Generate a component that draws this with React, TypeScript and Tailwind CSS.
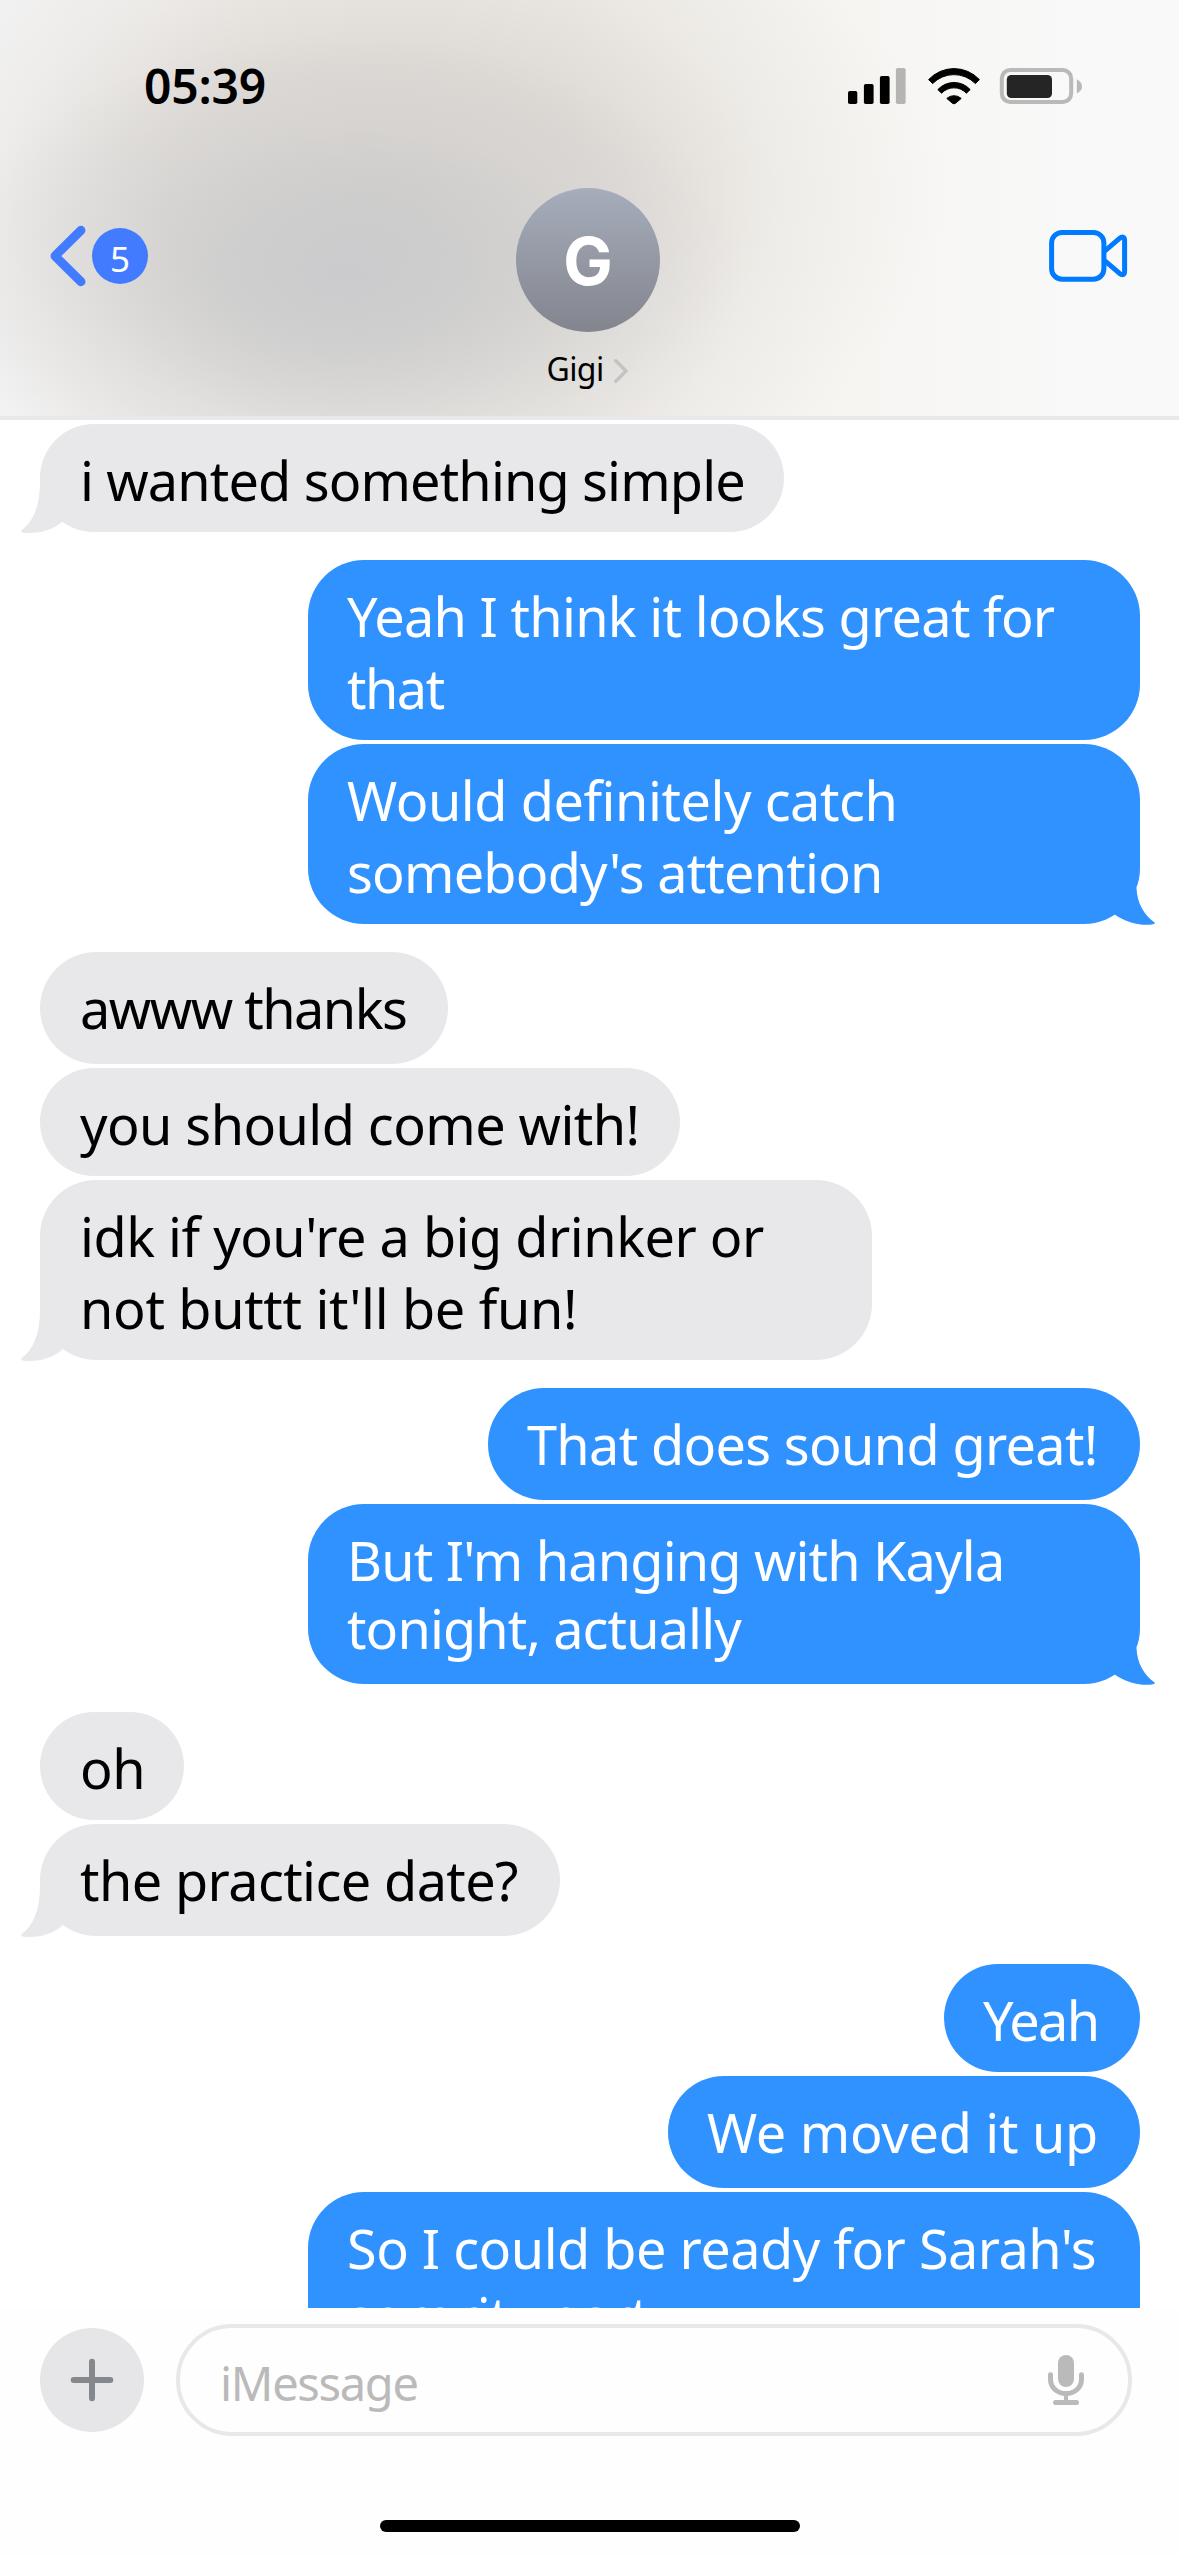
interface Line {
  text: string;
  tracking: string;
}

interface Message {
  id: string;
  size: string;
  leading?: string;
  lines: Line[];
}

interface Group {
  id: string;
  from: 'me' | 'them';
  tail: boolean;
  messages: Message[];
}

const GROUPS: Group[] = [
  {
    id: 'g1',
    from: 'them',
    tail: true,
    messages: [
      {
        id: 'm1',
        size: 'w-[744px] h-[108px]',
        lines: [{ text: 'i wanted something simple', tracking: 'tracking-[-0.85px]' }],
      },
    ],
  },
  {
    id: 'g2',
    from: 'me',
    tail: true,
    messages: [
      {
        id: 'm2',
        size: 'w-[832px] h-[180px]',
        lines: [
          { text: 'Yeah I think it looks great for', tracking: 'tracking-[-0.7px]' },
          { text: 'that', tracking: 'tracking-[-1.5px]' },
        ],
      },
      {
        id: 'm3',
        size: 'w-[832px] h-[180px]',
        lines: [
          { text: 'Would definitely catch', tracking: 'tracking-[-0.45px]' },
          { text: "somebody's attention", tracking: 'tracking-[-0.78px]' },
        ],
      },
    ],
  },
  {
    id: 'g3',
    from: 'them',
    tail: true,
    messages: [
      {
        id: 'm4',
        size: 'w-[408px] h-[112px]',
        lines: [{ text: 'awww thanks', tracking: 'tracking-[-1.5px]' }],
      },
      {
        id: 'm5',
        size: 'w-[640px] h-[108px]',
        lines: [{ text: 'you should come with!', tracking: 'tracking-[-0.57px]' }],
      },
      {
        id: 'm6',
        size: 'w-[832px] h-[180px]',
        lines: [
          { text: "idk if you're a big drinker or", tracking: 'tracking-[-0.49px]' },
          { text: "not buttt it'll be fun!", tracking: 'tracking-[-0.33px]' },
        ],
      },
    ],
  },
  {
    id: 'g4',
    from: 'me',
    tail: true,
    messages: [
      {
        id: 'm7',
        size: 'w-[652px] h-[112px]',
        lines: [{ text: 'That does sound great!', tracking: 'tracking-[-0.66px]' }],
      },
      {
        id: 'm8',
        size: 'w-[832px] h-[180px]',
        leading: 'pt-[22px] leading-[68px]',
        lines: [
          { text: "But I'm hanging with Kayla", tracking: 'tracking-[-0.83px]' },
          { text: 'tonight, actually', tracking: 'tracking-[-0.88px]' },
        ],
      },
    ],
  },
  {
    id: 'g5',
    from: 'them',
    tail: true,
    messages: [
      {
        id: 'm9',
        size: 'w-[144px] h-[108px]',
        lines: [{ text: 'oh', tracking: 'tracking-[-0.5px]' }],
      },
      {
        id: 'm10',
        size: 'w-[520px] h-[112px]',
        lines: [{ text: 'the practice date?', tracking: 'tracking-[-0.6px]' }],
      },
    ],
  },
  {
    id: 'g6',
    from: 'me',
    tail: false,
    messages: [
      {
        id: 'm11',
        size: 'w-[196px] h-[108px]',
        lines: [{ text: 'Yeah', tracking: 'tracking-[-1.6px]' }],
      },
      {
        id: 'm12',
        size: 'w-[472px] h-[112px]',
        lines: [{ text: 'We moved it up', tracking: 'tracking-[-0.28px]' }],
      },
      {
        id: 'm13',
        size: 'w-[832px] h-[180px]',
        leading: 'pt-[22px] leading-[68px]',
        lines: [
          { text: "So I could be ready for Sarah's", tracking: 'tracking-[-0.5px]' },
          { text: 'sorority party', tracking: 'tracking-[-1px]' },
        ],
      },
    ],
  },
];

const HEADER_BG =
  'bg-[radial-gradient(ellipse_400px_240px_at_345px_275px,rgba(200,201,205,0.85)_0%,rgba(202,203,204,0.72)_30%,rgba(208,208,208,0.4)_62%,rgba(225,224,220,0)_100%),radial-gradient(ellipse_560px_340px_at_385px_195px,rgba(208,202,198,0.8)_0%,rgba(212,207,202,0.65)_38%,rgba(225,221,215,0.3)_70%,rgba(240,238,234,0)_100%),linear-gradient(to_right,#f4f4f5_0%,#f0edea_22%,#eeebe7_48%,#f6f5f2_72%,#f9f9f9_92%)]';

function StatusIcons() {
  return (
    <svg viewBox="848 66 236 40" className="h-10 w-[236px]" aria-hidden="true">
      <rect x="848" y="91" width="9.3" height="13" rx="1.8" />
      <rect x="863.9" y="84" width="9.7" height="20" rx="1.8" />
      <rect x="879.9" y="76" width="9.7" height="28" rx="1.8" />
      <rect x="895.9" y="68" width="9.7" height="36" rx="1.8" fill="#b5b4b3" />
      <g stroke="#000" strokeLinejoin="round">
        <path d="M928.6 79.6A34.8 34.8 0 0 1 979.4 79.6L975.4 83.6A30 30 0 0 0 932.6 83.6Z" />
        <path d="M937.8 89.6A22 22 0 0 1 970.2 89.6L966.4 93.2A17 17 0 0 0 941.6 93.2Z" />
        <path d="M946.8 98.4A11 11 0 0 1 961.2 98.4L955.6 103.2Q954 104.4 952.4 103.2Z" />
      </g>
      <rect x="1001.8" y="70" width="69.4" height="32" rx="8.5" fill="none" stroke="#b9b9b9" strokeWidth="4" />
      <rect x="1006.8" y="75" width="45.2" height="23" rx="4.5" fill="#252525" />
      <path d="M1076.8 79.3Q1082 82.2 1082 86.4T1076.8 93.5Z" fill="#b9b9b9" />
    </svg>
  );
}

function BackChevron() {
  return (
    <svg viewBox="50 225 36 62" className="h-[62px] w-9" fill="none" aria-hidden="true">
      <path
        d="M81 230.3L55 256L81 281.7"
        stroke="#427bff"
        strokeWidth="9"
        strokeLinecap="round"
        strokeLinejoin="round"
      />
    </svg>
  );
}

function VideoIcon() {
  return (
    <svg viewBox="1048 229 80 54" className="h-[54px] w-20" fill="none" aria-hidden="true">
      <g stroke="#007aff" strokeWidth="5" strokeLinejoin="round">
        <rect x="1051.6" y="232.5" width="52.3" height="46.7" rx="10.5" />
        <path d="M1104 251.6L1119.6 238.3C1122.6 236 1124.6 237 1124.6 240.4V271.3C1124.6 274.7 1122.6 275.7 1119.6 273.4L1104 260.1" />
      </g>
    </svg>
  );
}

function MicIcon() {
  return (
    <svg viewBox="1046 2355 40 54" className="h-[54px] w-10" fill="none" aria-hidden="true">
      <rect x="1058" y="2357" width="16" height="32" rx="8" fill="#bababa" />
      <path
        d="M1050.5 2376.8V2381C1050.5 2389.6 1057.2 2395.5 1066 2395.5S1081.5 2389.6 1081.5 2381V2376.8M1055.5 2404.6H1076.5"
        stroke="#bababa"
        strokeWidth="5"
        strokeLinecap="round"
      />
      <path d="M1066 2396V2404" stroke="#bababa" strokeWidth="4" />
    </svg>
  );
}

function Tail({ from }: { from: Group['from'] }) {
  if (from === 'me') {
    return (
      <svg viewBox="0 0 46 52" className="absolute -right-4 -bottom-0.5 h-[52px] w-[46px]" aria-hidden="true">
        <path
          d="M26.5 14C27 29 34 41 44.6 48.6Q45.6 50 42 50.5C29 52 15 48 4.7 40.5L4 14Z"
          fill="#2f92ff"
        />
      </svg>
    );
  }
  return (
    <svg viewBox="0 0 60 60" className="absolute -bottom-0.5 -left-5 h-[60px] w-[60px]" aria-hidden="true">
      <path
        d="M20 0V8C20 32 13 48 1.6 56Q0 58.6 5 58.9C20 60 34 55.4 43 47L56 30Z"
        fill="#e8e8ea"
      />
    </svg>
  );
}

function Bubble({ message, from, tail }: { message: Message; from: Group['from']; tail: boolean }) {
  const color = from === 'me' ? 'bg-[#2f92ff] pl-[39px] text-white' : 'bg-[#e8e8ea] pl-10 text-black';
  const leading = message.leading ?? 'pt-5 leading-[72px]';
  return (
    <div
      className={`relative shrink-0 rounded-[56px] text-[54px] whitespace-nowrap ${message.size} ${color} ${leading}`}
    >
      {message.lines.map((l) => (
        <p key={l.text} className={l.tracking}>
          {l.text}
        </p>
      ))}
      {tail ? <Tail from={from} /> : null}
    </div>
  );
}

function Header() {
  return (
    <header className={`flex h-[420px] shrink-0 flex-col border-b-4 border-[#e8e8ea] ${HEADER_BG}`}>
      <div className="flex h-[188px] items-start justify-between pt-[66px] pr-[95px] pl-36">
        <span className="-mt-2 text-[48px] leading-[56px] font-semibold tracking-[-0.2px]">05:39</span>
        <StatusIcons />
      </div>
      <div className="grid grid-cols-3 items-start">
        <div className="flex items-center gap-1.5 pt-[37px] pl-[50px]">
          <BackChevron />
          <span className="flex size-14 items-center justify-center rounded-full bg-[#427bff] pt-1 text-[35px] leading-none text-white">
            5
          </span>
        </div>
        <div className="flex flex-col items-center pr-[3px]">
          <div className="flex size-36 items-center justify-center rounded-full bg-linear-to-b from-[#a6adbb] to-[#83858e] pt-0.5 font-['Inter',sans-serif] text-[66px] font-bold text-white">
            G
          </div>
          <div className="mt-[15px] flex items-center gap-2.5 pr-0.5">
            <span className="text-[32px] leading-[44px] tracking-[-0.6px]">Gigi</span>
            <svg viewBox="613 359 14 26" className="mt-1 h-[26px] w-3.5" fill="none" aria-hidden="true">
              <path
                d="M614.8 361.8L625 372L614.8 382.2"
                stroke="#c3c3c3"
                strokeWidth="3.4"
                strokeLinecap="round"
                strokeLinejoin="round"
              />
            </svg>
          </div>
        </div>
        <div className="flex justify-end pt-[41px] pr-[51px]">
          <VideoIcon />
        </div>
      </div>
    </header>
  );
}

function Composer() {
  return (
    <footer className="flex h-[248px] shrink-0 flex-col items-center justify-between bg-[#fefefe] pt-4 pb-6">
      <div className="flex w-full items-center gap-8 pr-[47px] pl-10">
        <button
          type="button"
          aria-label="Add attachment"
          className="flex size-[104px] items-center justify-center rounded-full bg-[#e6e6e8]"
        >
          <svg viewBox="0 0 44 44" className="size-11" fill="none" aria-hidden="true">
            <path d="M22 3.7V40.3M3.7 22H40.3" stroke="#84878c" strokeWidth="6" strokeLinecap="round" />
          </svg>
        </button>
        <div className="flex h-28 flex-1 items-center justify-between rounded-full border-4 border-[#e8e8e8] pr-[42px] pl-10">
          <span className="pt-1.5 text-[47px] leading-[64px] tracking-[-1.3px] text-[#bababa]">iMessage</span>
          <MicIcon />
        </div>
      </div>
      <div className="h-3 w-[420px] rounded-full bg-black" />
    </footer>
  );
}

export default function App() {
  return (
    <div className="flex h-[2556px] w-[1179px] flex-col overflow-hidden bg-white font-['Noto_Sans',sans-serif] text-black">
      <Header />
      <main className="flex min-h-0 flex-1 flex-col gap-7 overflow-hidden pt-1 pr-[39px] pl-10">
        {GROUPS.map((g) => (
          <section
            key={g.id}
            className={`flex shrink-0 flex-col gap-1 ${g.from === 'me' ? 'items-end' : 'items-start'}`}
          >
            {g.messages.map((m, i) => (
              <Bubble key={m.id} message={m} from={g.from} tail={g.tail && i === g.messages.length - 1} />
            ))}
          </section>
        ))}
      </main>
      <Composer />
    </div>
  );
}
